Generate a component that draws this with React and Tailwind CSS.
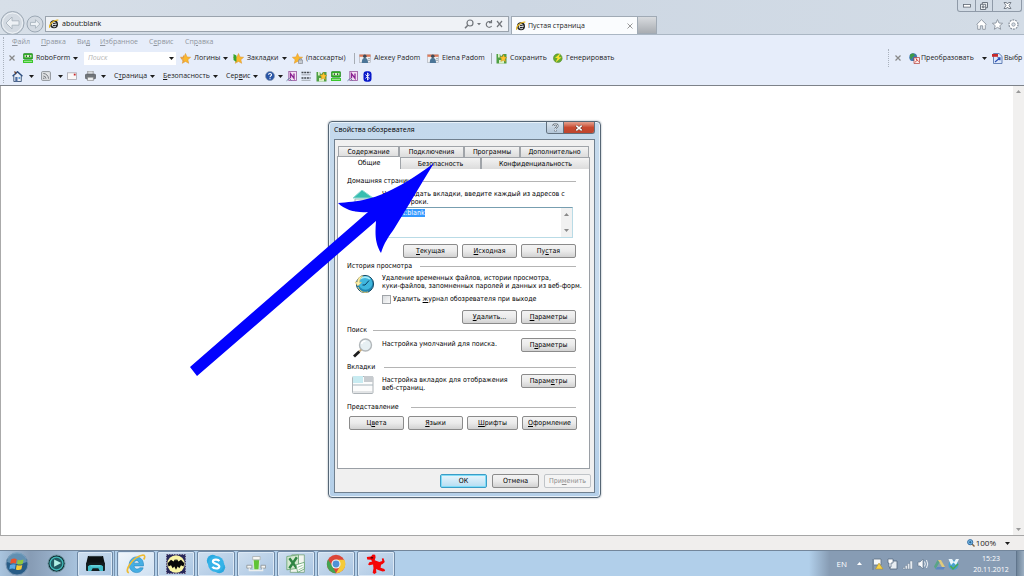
import React, { useEffect, useRef } from "react";

const uiFont = "font-['Open_Sans','Noto_Sans',sans-serif]";
const dlgFont = "font-['DejaVu_Sans_Condensed','DejaVu_Sans',sans-serif]";

function Caret({ className = "" }) {
  return (
    <svg viewBox="0 0 5 3" className={`h-[3px] w-[5px] shrink-0 ${className}`} aria-hidden="true">
      <path d="M0 0H5L2.5 3Z" fill="currentColor" />
    </svg>
  );
}

function IeIcon() {
  return (
    <svg viewBox="0 0 10 10" className="h-[10px] w-[10px] shrink-0" aria-hidden="true">
      <circle cx="5" cy="5.3" r="4" fill="#222" />
      <path d="M3 5.4H7.6M3.1 5A2 2 0 0 1 7 4.6M3.1 5.8A2.1 2.1 0 0 0 7 6.8" stroke="#e9edf2" strokeWidth="1" fill="none" />
      <path d="M.7 8.8C-.5 6 5 .2 9.3 1.2" stroke="#e3b52a" strokeWidth="1.3" fill="none" />
    </svg>
  );
}

function RoboIcon() {
  return (
    <svg viewBox="0 0 10 10" className="h-[10px] w-[10px] shrink-0" aria-hidden="true">
      <rect x=".4" y=".4" width="9.2" height="5.8" rx="1.2" fill="#2fae25" stroke="#157a12" strokeWidth=".6" />
      <rect x="1.6" y="2" width="6.8" height="2.3" fill="#d9f7c9" />
      <path d="M2.8 3.1H4M6 3.1H7.2" stroke="#111" strokeWidth="1.2" />
      <path d="M0 7H10V10H0Z" fill="#3bc72c" />
      <path d="M1 8.4H9" stroke="#e6ffdd" strokeWidth=".6" />
    </svg>
  );
}

function StarIcon({ mark }) {
  return (
    <svg viewBox="0 0 11 11" className="h-[11px] w-[11px] shrink-0" aria-hidden="true">
      <path d="M5.5 .5L7 4 10.6 4.3 7.8 6.7 8.7 10.3 5.5 8.4 2.3 10.3 3.2 6.7 .4 4.3 4 4Z" fill="#fbb82b" stroke="#e09a35" strokeWidth=".6" />
      {mark === "gear" && <path d="M1 5H3.5V2.5M1 5L4 9" stroke="#e39a4a" strokeWidth="1" fill="none" />}
      {mark === "book" && <path d="M.5 1L3.4 2.5V9L.5 7Z" fill="#37a52c" />}
      {mark === "lock" && <path d="M6.5 7H10.5V10.5H6.5ZM7.4 7V5.8H9.6V7" fill="#c7ccd3" stroke="#7d858e" strokeWidth=".6" />}
    </svg>
  );
}

function CardIcon() {
  return (
    <svg viewBox="0 0 12 11" className="h-[11px] w-[12px] shrink-0" aria-hidden="true">
      <rect x=".5" y="1.8" width="11" height="7.8" fill="#eef0f3" stroke="#a8acb3" strokeWidth=".6" />
      <path d="M.5 1.6H11.5V3.8H.5Z" fill="#dd7857" />
      <circle cx="5.8" cy="3.2" r="1.8" fill="#414c59" />
      <path d="M2.8 10C2.8 6 4 5 5.8 5S9 6 9 10Z" fill="#4b7597" />
      <path d="M9 5.6H11M9 7.4H11" stroke="#82909c" strokeWidth=".7" />
    </svg>
  );
}

function SaveIcon() {
  return (
    <svg viewBox="0 0 11 11" className="h-[11px] w-[11px] shrink-0" aria-hidden="true">
      <path d="M.5 1H4L5 3.5 7 1H10.5V10.5H.5Z" fill="#4fa043" />
      <path d="M2 1H3.8V4.4H2ZM3 7H8V10.5H3Z" fill="#d9f0c5" />
      <path d="M7.6 1.2L8.7 4 11 4.3 9 6 9.7 8.8 7.3 7.3 4.8 8.4 5.5 5.9 4 4 6.6 3.8Z" fill="#ffc52e" stroke="#b8811d" strokeWidth=".4" />
    </svg>
  );
}

function OneNoteIcon() {
  return (
    <svg viewBox="0 0 11 11" className="h-[11px] w-[11px] shrink-0" aria-hidden="true">
      <rect x="2.8" y=".5" width="7.7" height="9" fill="#f4dff3" stroke="#97559c" strokeWidth=".8" />
      <path d="M4.5 7.2V2.6L8 7.2V2.6" fill="none" stroke="#8a2392" strokeWidth="1.3" />
      <path d="M.5 9.8L3.4 7.3 5.7 9.8" fill="none" stroke="#6680a2" strokeWidth="1" />
    </svg>
  );
}

function HomeIcon() {
  return (
    <svg viewBox="0 0 11 11" className="h-[11px] w-[11px] shrink-0" aria-hidden="true">
      <path d="M1.8 5V10.5H9.3V5" fill="#e8edf4" stroke="#3b5476" strokeWidth=".9" />
      <path d="M.6 5.3L5.5 .8 10.4 5.3" fill="none" stroke="#2d4e7e" strokeWidth="1.5" />
      <path d="M2 1H3.7V3.2" stroke="#6b391f" strokeWidth="1" fill="none" />
      <rect x="3.3" y="6" width="2.2" height="4.5" fill="#4c6ca2" />
      <rect x="6.5" y="6" width="1.8" height="2" fill="#65a0d8" />
    </svg>
  );
}

function FeedIcon() {
  return (
    <svg viewBox="0 0 10 10" className="h-[10px] w-[10px] shrink-0" aria-hidden="true">
      <rect x=".6" y=".6" width="8.8" height="8.8" rx="1" fill="#e2e4e6" stroke="#858a90" strokeWidth=".9" />
      <path d="M2.3 2.5A5.2 5.2 0 0 1 7.5 7.7M2.3 5A2.7 2.7 0 0 1 5 7.7" fill="none" stroke="#777b80" strokeWidth="1" />
      <circle cx="2.8" cy="7.2" r=".8" fill="#777b80" />
    </svg>
  );
}

function MailIcon() {
  return (
    <svg viewBox="0 0 10 8" className="h-[8px] w-[10px] shrink-0" aria-hidden="true">
      <rect x=".5" y=".8" width="9" height="6.6" fill="#faf8f8" stroke="#a9a8b0" strokeWidth=".8" />
      <rect x="6.8" y="1.7" width="1.8" height="1.8" fill="#c8242a" />
    </svg>
  );
}

function PrinterIcon() {
  return (
    <svg viewBox="0 0 11 10" className="h-[10px] w-[11px] shrink-0" aria-hidden="true">
      <path d="M2.7 0H8.2V4H2.7Z" fill="#d9dcdf" stroke="#777" strokeWidth=".6" />
      <rect x=".4" y="3.2" width="10.2" height="4.6" rx="1" fill="#70757a" stroke="#44484c" strokeWidth=".6" />
      <path d="M2.5 6.2H8.4V9.6H2.5Z" fill="#eceeef" stroke="#777" strokeWidth=".6" />
    </svg>
  );
}

function HelpIcon() {
  return (
    <svg viewBox="0 0 10 10" className="h-[10px] w-[10px] shrink-0" aria-hidden="true">
      <circle cx="5" cy="5" r="4.5" fill="#2754a6" stroke="#8998ae" strokeWidth=".7" />
      <path d="M3.5 3.8C3.6 2 6.6 2.2 6.5 3.9 6.4 4.9 5 4.9 5 6.2" fill="none" stroke="#fff" strokeWidth="1.1" />
      <circle cx="5" cy="7.7" r=".6" fill="#fff" />
    </svg>
  );
}

function FieldsIcon() {
  return (
    <svg viewBox="0 0 10 10" className="h-[10px] w-[10px] shrink-0" aria-hidden="true">
      <path d="M.5 1.5H9.5M.5 7H9.5" stroke="#44484e" strokeWidth="1.4" strokeDasharray="2 .7" />
      <path d="M.5 3.8H9.5M.5 9.3H9.5" stroke="#8f959c" strokeWidth=".8" />
    </svg>
  );
}

function BluetoothIcon() {
  return (
    <svg viewBox="0 0 9 11" className="h-[11px] w-[9px] shrink-0" aria-hidden="true">
      <rect x=".5" y=".2" width="8" height="10.6" rx="3" fill="#0818c9" />
      <path d="M2.4 3.5L6.4 7.2 4.5 9V2L6.4 3.8 2.4 7.4" fill="none" stroke="#fff" strokeWidth=".9" />
    </svg>
  );
}

function GenerateIcon() {
  return (
    <svg viewBox="0 0 10 10" className="h-[10px] w-[10px] shrink-0" aria-hidden="true">
      <circle cx="4.8" cy="5.2" r="4.4" fill="#64ab31" stroke="#5b8a2b" strokeWidth=".5" />
      <path d="M7.5 0L2 5H4.6L2.5 9.6 8.6 4.2H5.8Z" fill="#ffe22f" />
    </svg>
  );
}

function ConvertIcon() {
  return (
    <svg viewBox="0 0 11 11" className="h-[11px] w-[11px] shrink-0" aria-hidden="true">
      <circle cx="4.2" cy="4.2" r="3.9" fill="#3e77b0" />
      <path d="M1 2C2.5 0 5 0 5.5 1.5S4.5 3.5 3.5 4 3 7 1.5 6Z" fill="#3e9a44" />
      <path d="M5 4.5H10.5V10.5H5Z" fill="#f7eded" stroke="#b43c35" strokeWidth=".7" />
      <path d="M6 9.5Q9 7 7.4 5.8T9.8 8.7" stroke="#cf2d24" strokeWidth=".8" fill="none" />
    </svg>
  );
}

function SelectIcon() {
  return (
    <svg viewBox="0 0 11 11" className="h-[11px] w-[11px] shrink-0" aria-hidden="true">
      <path d="M1.5 .5H7L10 3.3V10.5H1.5Z" fill="#dce8fa" stroke="#4769a8" strokeWidth=".8" />
      <path d="M0 1H6V3.8H0Z" fill="#c62a2b" />
      <path d="M3 9L7.8 5M5.5 4.8H8V7.3" stroke="#2b4fb4" strokeWidth="1.1" fill="none" />
    </svg>
  );
}

function Tool({ className = "", icon, label, caret }) {
  return (
    <button type="button" className={`flex h-3 shrink-0 items-center gap-[3px] whitespace-nowrap text-left ${className}`}>
      {icon}
      {label && <span>{label}</span>}
      {caret && <Caret />}
    </button>
  );
}

function Header() {
  return (
    <header className="flex h-[34px] shrink-0 items-stretch bg-linear-to-r from-[#d7dfe8] via-[#cdd7e3] to-[#d3dce6]">
      <nav className="flex shrink-0 items-end" aria-label="История">
        <button type="button" aria-label="Назад" className="h-[25px] w-[25px]">
          <svg viewBox="0 0 25 25" className="h-full w-full">
            <circle cx="12.5" cy="14" r="11.5" fill="#d3dae2" stroke="#9da9b5" />
            <circle cx="12.5" cy="14" r="10" fill="none" stroke="#eef2f6" />
            <path d="M6 14L12 8V11.8H19V16.2H12V20Z" fill="#edf1f5" stroke="#a3aeb9" strokeWidth=".8" />
          </svg>
        </button>
        <button type="button" aria-label="Вперед" className="h-[20px] w-[20px] self-end">
          <svg viewBox="0 0 20 20" className="h-full w-full">
            <circle cx="10" cy="10" r="8" fill="#d3dae2" stroke="#9da9b5" />
            <path d="M14.8 10L10.5 5.7V8.4H5.5V11.6H10.5V14.3Z" fill="#edf1f5" stroke="#a3aeb9" strokeWidth=".8" />
          </svg>
        </button>
      </nav>
      <div className="mt-4 mb-[2px] flex w-[464px] shrink-0 items-center border border-[#9aa3ad] bg-[#eff2f6] pr-1 pl-[3px]">
        <IeIcon />
        <input aria-label="Адрес" defaultValue="about:blank" className="ml-[3px] min-w-0 flex-1 bg-transparent font-['Noto_Sans',sans-serif] text-[7px] leading-[12px] text-[#222] outline-none" />
        <svg viewBox="0 0 40 12" className="h-3 w-10 shrink-0 text-[#73777c]" fill="none" stroke="currentColor" strokeWidth="1.2" aria-hidden="true">
          <circle cx="6" cy="5" r="3" />
          <path d="M3.8 7.3L1 10.2" strokeWidth="1.5" />
          <path d="M13 5H17L15 7.2Z" fill="currentColor" stroke="none" />
          <path d="M27.4 4.5A2.9 2.9 0 1 0 27.6 8M27.5 2V4.7H25" />
          <path d="M33 3L38 9M38 3L33 9" />
        </svg>
      </div>
      <div className="mt-4 ml-[2px] flex w-[127px] shrink-0 items-center border border-b-0 border-[#a0aab5] bg-[#fafcfe] px-1">
        <IeIcon />
        <span className="ml-[2px] flex-1 whitespace-nowrap">Пустая страница</span>
        <button type="button" aria-label="Закрыть вкладку">
          <svg viewBox="0 0 6 6" className="h-[6px] w-[6px] stroke-[#999]"><path d="M.5 .5L5.5 5.5M5.5 .5L.5 5.5" /></svg>
        </button>
      </div>
      <button type="button" aria-label="Создать вкладку" className="mt-4 w-[19px] shrink-0 border border-l-0 border-[#a0aab5] bg-linear-to-b from-[#d8dbdf] to-[#a9adb2]" />
      <div className="ml-auto flex flex-col items-end justify-between pr-[2px]">
        <div className="flex h-3 items-center rounded-b-[3px] border border-t-0 border-[#8f9aa8] text-[#5e6772]">
          <button type="button" aria-label="Свернуть" className="flex h-full w-[18px] items-center justify-center border-r border-[#8f9aa8]">
            <svg viewBox="0 0 8 4" className="h-1 w-2"><rect x=".5" y=".5" width="7" height="2.6" fill="#fff" stroke="currentColor" strokeWidth=".8" /></svg>
          </button>
          <button type="button" aria-label="Развернуть" className="flex h-full w-[17px] items-center justify-center border-r border-[#8f9aa8]">
            <svg viewBox="0 0 8 8" className="h-2 w-2" fill="#f1f4f7" stroke="currentColor" strokeWidth=".9"><path d="M2.3 .5H7.5V5.7H2.3Z" /><path d="M.5 2.3H5.7V7.5H.5Z" /><path d="M2.3 4H4V5.7H2.3Z" /></svg>
          </button>
          <button type="button" aria-label="Закрыть" className="flex h-full w-[28px] items-center justify-center">
            <svg viewBox="0 0 9 7" className="h-[7px] w-[9px]"><path d="M1 .5H3.4L4.5 2 5.6 .5H8L6 3.5 8 6.5H5.6L4.5 5 3.4 6.5H1L3 3.5Z" fill="#fff" stroke="currentColor" strokeWidth=".8" /></svg>
          </button>
        </div>
        <div className="flex gap-[5px] pr-[3px] pb-1">
          <button type="button" aria-label="Домой"><svg viewBox="0 0 11 11" className="h-[11px] w-[11px]" fill="#fff" stroke="#8b949f" strokeWidth=".9"><path d="M5.5 .7L.8 5.3 1.7 6.2V10.3H4.3V6.8H6.7V10.3H9.3V6.2L10.2 5.3Z" /></svg></button>
          <button type="button" aria-label="Избранное"><svg viewBox="0 0 11 11" className="h-[11px] w-[11px]" fill="#fff" stroke="#8b949f" strokeWidth=".9"><path d="M5.5 .5L7 4 10.6 4.3 7.8 6.7 8.7 10.3 5.5 8.4 2.3 10.3 3.2 6.7 .4 4.3 4 4Z" /></svg></button>
          <button type="button" aria-label="Настройки"><svg viewBox="0 0 11 11" className="h-[11px] w-[11px]"><circle cx="5.5" cy="5.5" r="4.5" fill="#fff" stroke="#8b949f" strokeWidth="1.4" strokeDasharray="1.8 1" /><circle cx="5.5" cy="5.5" r="3.7" fill="#fff" /><circle cx="5.5" cy="5.5" r="1.7" fill="#d5dde6" stroke="#8b949f" strokeWidth=".8" /></svg></button>
        </div>
      </div>
    </header>
  );
}

function CloseBar() {
  return (
    <button type="button" aria-label="Закрыть панель" className="w-[14px] shrink-0">
      <svg viewBox="0 0 6 6" className="h-[6px] w-[6px] stroke-[#888]"><path d="M.5 .5L5.5 5.5M5.5 .5L.5 5.5" strokeWidth="1.2" /></svg>
    </button>
  );
}

function Toolbars() {
  return (
    <div className="flex h-[52px] shrink-0 overflow-hidden border-t border-b border-t-[#aab6c3] border-b-[#7d8289] bg-[#e6edfa]">
      <div className="my-[2px] w-[4px] shrink-0 border-r border-dotted border-[#aab2bd]" />
      <div className="flex min-w-0 flex-1 flex-col pl-[5px]">
        <nav className="flex h-[14px] items-center pl-[3px] text-[#9096a0]">
          <button type="button" className="w-[29px] text-left"><u>Ф</u>айл</button>
          <button type="button" className="w-9 text-left"><u>П</u>равка</button>
          <button type="button" className="w-[23px] text-left">Ви<u>д</u></button>
          <button type="button" className="w-[49px] text-left"><u>И</u>збранное</button>
          <button type="button" className="w-9 text-left">С<u>е</u>рвис</button>
          <button type="button" className="text-left">Сп<u>р</u>авка</button>
        </nav>
        <div className="flex h-[18px] items-center">
          <CloseBar />
          <Tool className="w-[61px]" icon={<RoboIcon />} label="RoboForm" caret />
          <div className="mr-1 flex h-[13px] w-[92px] shrink-0 items-center bg-white pr-[2px] pl-1">
            <input aria-label="Поиск" placeholder="Поиск" className="min-w-0 flex-1 bg-transparent italic outline-none placeholder:text-[#b5b5b5]" />
            <Caret />
          </div>
          <Tool className="w-[53px]" icon={<StarIcon mark="gear" />} label="Логины" caret />
          <Tool className="w-[59px]" icon={<StarIcon mark="book" />} label="Закладки" caret />
          <Tool className="w-[62px]" icon={<StarIcon mark="lock" />} label="(пасскарты)" />
          <div className="mr-1 h-[11px] w-px shrink-0 bg-[#a7adb5]" />
          <Tool className="w-[68px]" icon={<CardIcon />} label="Alexey Padom" />
          <Tool className="w-[64px]" icon={<CardIcon />} label="Elena Padom" />
          <div className="mr-1 h-[11px] w-px shrink-0 bg-[#a7adb5]" />
          <Tool className="w-[57px]" icon={<SaveIcon />} label="Сохранить" />
          <Tool icon={<GenerateIcon />} label="Генерировать" />
        </div>
        <div className="flex h-[18px] items-center pl-[3px]">
          <Tool className="w-[29px]" icon={<span className="flex w-[14px]"><HomeIcon /></span>} caret />
          <Tool className="w-[26px]" icon={<span className="flex w-[14px]"><FeedIcon /></span>} caret />
          <Tool className="w-[18px]" icon={<MailIcon />} />
          <Tool className="w-[29px]" icon={<span className="flex w-[13px]"><PrinterIcon /></span>} caret />
          <Tool className="w-[49px]" label={<>С<u>т</u>раница</>} caret />
          <Tool className="w-[63px]" label={<><u>Б</u>езопасность</>} caret />
          <Tool className="w-[39px]" label={<>Сер<u>в</u>ис</>} caret />
          <Tool className="w-[21px]" icon={<HelpIcon />} caret />
          <Tool className="w-[15px]" icon={<OneNoteIcon />} />
          <Tool className="w-[15px]" icon={<FieldsIcon />} />
          <Tool className="w-[15px]" icon={<SaveIcon />} />
          <Tool className="w-4" icon={<RoboIcon />} />
          <Tool className="w-4" icon={<OneNoteIcon />} />
          <Tool icon={<BluetoothIcon />} />
        </div>
      </div>
      <div className="mt-[14px] flex h-[18px] w-[136px] shrink-0 items-center overflow-hidden border-l border-dotted border-[#aab2bd] pl-[6px]">
        <CloseBar />
        <button type="button" className="flex w-[73px] shrink-0 items-center gap-px whitespace-nowrap"><ConvertIcon />Преобразовать</button>
        <Caret className="mr-[5px]" />
        <button type="button" className="flex shrink-0 items-center gap-px whitespace-nowrap"><SelectIcon />Выбр</button>
      </div>
    </div>
  );
}

function DlgButton({ children, className = "w-[55px]", tone = "normal" }) {
  const tones = {
    normal: "border-[#8b8b8b] bg-linear-to-b from-[#f3f3f3] via-[#ebebeb] to-[#d2d2d2] text-black",
    primary: "border-[#3a9cc6] bg-linear-to-b from-[#e8f5fc] to-[#b5ddf2] text-black shadow-[inset_0_0_0_1px_#7fdcf7]",
    off: "border-[#c0c4c8] bg-[#f4f4f4] text-[#8f8f8f]",
  };
  return (
    <button type="button" disabled={tone === "off"} className={`flex h-[14px] shrink-0 items-center justify-center rounded-[2px] border whitespace-nowrap ${tones[tone]} ${className}`}>
      <span>{children}</span>
    </button>
  );
}

function Legend({ children, className = "gap-2" }) {
  return (
    <h2 className={`flex h-[10px] items-center whitespace-nowrap ${className}`}>
      {children}
      <span className="h-px flex-1 bg-[#b4b4b4]" />
    </h2>
  );
}

const tabBase = "h-full border border-b-0 border-[#a0a4a9] bg-linear-to-b from-[#f3f3f3] to-[#dcdcdc] whitespace-nowrap";

function OptionsDialog() {
  const pages = useRef(null);
  useEffect(() => {
    pages.current.focus();
    pages.current.select();
  }, []);
  return (
    <section role="dialog" aria-label="Свойства обозревателя" className={`absolute top-[121px] left-[328px] flex w-[273px] flex-col rounded-[4px] border border-[#566675] bg-linear-to-b from-[#c4d9ec] via-[#c9dcee] to-[#b4cfe8] px-[5px] pb-[4px] text-[7px] leading-[8px] text-black shadow-[0_0_2px_#8a97a4,inset_0_0_0_1px_#e8f2fa] ${dlgFont}`}>
      <div className="flex h-[17px] items-start justify-between">
        <h1 className={`pt-[3px] text-[7px] leading-[10px] ${uiFont}`}>Свойства обозревателя</h1>
        <div className="flex h-3 overflow-hidden rounded-b-[3px] border border-t-0 border-[#61707e]">
          <button type="button" aria-label="Справка" className="flex w-[17px] items-center justify-center border-r border-[#61707e] bg-linear-to-b from-[#dce6ef] to-[#b3c5d7]">
            <svg viewBox="0 0 7 9" className="h-[9px] w-[7px]" fill="none"><path d="M1.3 3C1.4 .6 5.7 .6 5.6 3 5.5 4.3 3.5 4.2 3.5 6M3.5 7V8.4" stroke="#566370" strokeWidth="2" /><path d="M1.3 3C1.4 .6 5.7 .6 5.6 3 5.5 4.3 3.5 4.2 3.5 6M3.5 7.1V8.2" stroke="#fff" strokeWidth=".9" /></svg>
          </button>
          <button type="button" aria-label="Закрыть" className="flex w-[30px] items-center justify-center bg-linear-to-b from-[#e3a18f] via-[#c84930] to-[#bd452e]">
            <svg viewBox="0 0 8 6" className="h-[6px] w-2"><path d="M1 .5L7 5.5M7 .5L1 5.5" stroke="#60372f" strokeWidth="2.5" /><path d="M1.3 .7L6.7 5.3M6.7 .7L1.3 5.3" stroke="#fff" strokeWidth="1.6" /></svg>
          </button>
        </div>
      </div>
      <div className="flex flex-col border border-[#70808f] bg-[#f0f0f0] pt-[6px] pr-[4px] pb-[4px] pl-[2px]">
        <div role="tablist">
          <div className="grid h-[11px] grid-cols-[61px_65px_56px_1fr] pr-px pl-px">
            <button type="button" role="tab" className={tabBase}>Содержание</button>
            <button type="button" role="tab" className={tabBase}>Подключения</button>
            <button type="button" role="tab" className={tabBase}>Программы</button>
            <button type="button" role="tab" className={tabBase}>Дополнительно</button>
          </div>
          <div className="grid h-3 grid-cols-[63px_81px_1fr]">
            <button type="button" role="tab" aria-selected="true" className="-mt-px border-t border-l border-[#a0a4a9] bg-white">Общие</button>
            <button type="button" role="tab" className={tabBase}>Безопасность</button>
            <button type="button" role="tab" className={tabBase}>Конфиденциальность</button>
          </div>
        </div>
        <div role="tabpanel" className="flex flex-col border border-t-0 border-[#9a9fa5] bg-white pt-[7px] pr-[13px] pb-[38px] pl-[9px]">
          <Legend>Домашняя страница</Legend>
          <div className="mt-[4px] flex">
            <svg viewBox="0 0 20 24" className="mr-[9px] ml-[6px] h-6 w-5 shrink-0" aria-hidden="true">
              <path d="M2 9H18V21H2Z" fill="#eef3f5" stroke="#a1b4ba" />
              <path d="M0 8L9 0 20 8Z" fill="#38bdb0" stroke="#8cd9d1" />
              <path d="M7 12H12V21H7Z" fill="#a77c4f" />
            </svg>
            <div className="flex-1">
              <p className="whitespace-nowrap">Чтобы создать вкладки, введите каждый из адресов с<br />новой строки.</p>
              <div className="mt-px mr-[3px] flex h-[31px] border border-[#b9dbe6] border-t-[#779eb0]">
                <textarea ref={pages} aria-label="Адреса домашних страниц" defaultValue="about:blank" className="min-w-0 flex-1 resize-none overflow-hidden bg-white px-[4px] pt-px outline-none selection:bg-[#3399ff] selection:text-white" />
                <div className="flex w-[11px] flex-col items-center justify-between bg-[#f1f1f1] py-[5px] text-[#8a8a8a]">
                  <Caret className="rotate-180" />
                  <Caret />
                </div>
              </div>
            </div>
          </div>
          <div className="mt-[6px] flex justify-end gap-1">
            <DlgButton><u>Т</u>екущая</DlgButton>
            <DlgButton><u>И</u>сходная</DlgButton>
            <DlgButton>Пу<u>с</u>тая</DlgButton>
          </div>
          <Legend className="mt-[3px] gap-2">История просмотра</Legend>
          <div className="mt-[3px] flex">
            <svg viewBox="0 0 22 20" className="mr-[6px] ml-[7px] h-5 w-[22px] shrink-0" aria-hidden="true">
              <circle cx="11" cy="10" r="8.6" fill="#2188b3" stroke="#174c68" />
              <circle cx="11.5" cy="9" r="6.8" fill="#3fb7de" />
              <path d="M6 5A7.5 7.5 0 0 1 16 5" stroke="#a9ecfa" strokeWidth="1.6" fill="none" />
              <path d="M11 11L15 6.5M11 11L8.5 11" stroke="#083d63" strokeWidth="1" />
              <path d="M9 2C5 2 3.5 5 3.5 8L1 8 3.8 12 7.5 8.4H5.5C5.5 5.5 6.5 3.5 9 2Z" fill="#fff1a9" stroke="#d8bf72" strokeWidth=".6" />
              <path d="M4 13C6 18 10 19 14 18" stroke="#f0d67d" strokeWidth="1" fill="none" />
            </svg>
            <div className="flex-1">
              <p className="whitespace-nowrap">Удаление временных файлов, истории просмотра,<br />куки-файлов, запомненных паролей и данных из веб-форм.</p>
              <label className="mt-1 flex h-[10px] items-center gap-[2px] whitespace-nowrap">
                <input type="checkbox" className="h-[9px] w-[9px] shrink-0 appearance-none border border-[#a0a4a8] bg-linear-to-br from-[#d9dcdf] to-[#fafafa]" />
                <span>Удалить <u>ж</u>урнал обозревателя при выходе</span>
              </label>
            </div>
          </div>
          <div className="mt-[6px] flex justify-end gap-1">
            <DlgButton><u>У</u>далить...</DlgButton>
            <DlgButton><u>П</u>араметры</DlgButton>
          </div>
          <Legend className="mt-px gap-[6px]">Поиск</Legend>
          <div className="mt-[3px] flex">
            <svg viewBox="0 0 22 20" className="mr-[8px] ml-[5px] h-5 w-[22px] shrink-0" aria-hidden="true">
              <circle cx="13.5" cy="7" r="6" fill="#e6eff2" stroke="#b2b7ba" strokeWidth="1.4" />
              <path d="M9.5 6A4 4 0 0 1 13.5 3" stroke="#fff" strokeWidth="1.6" fill="none" />
              <path d="M9.3 11.6L7.3 13.5" stroke="#c5a877" strokeWidth="2" />
              <path d="M7.3 13.5L2 18.6" stroke="#1d1d1d" strokeWidth="2.8" />
            </svg>
            <p className="mt-[2px] flex-1">Настройка умолчаний для поиска.</p>
            <DlgButton>П<u>а</u>раметры</DlgButton>
          </div>
          <Legend className="mt-1 gap-[9px]">Вкладки</Legend>
          <div className="mt-[2px] flex">
            <svg viewBox="0 0 22 20" className="mr-[8px] ml-[5px] h-5 w-[22px] shrink-0" aria-hidden="true">
              <rect x=".5" y="2.5" width="20.5" height="17" rx="1" fill="#fcfcfc" stroke="#aeb4b8" />
              <path d="M1 2H11V9H1Z" fill="#c8ebf1" />
              <path d="M12 2H21V8H12Z" fill="#c7cbcf" />
              <path d="M1 11H21" stroke="#a8b6bd" strokeWidth="1" />
              <path d="M1 18H21" stroke="#c8cccf" strokeWidth="1" />
            </svg>
            <p className="mt-[2px] flex-1 whitespace-nowrap">Настройка вкладок для отображения<br />веб-страниц.</p>
            <DlgButton>Парам<u>е</u>тры</DlgButton>
          </div>
          <Legend className="mt-[8px] gap-3">Представление</Legend>
          <div className="mt-[4px] -mr-px flex justify-between pl-[2px]">
            <DlgButton>Ц<u>в</u>ета</DlgButton>
            <DlgButton><u>Я</u>зыки</DlgButton>
            <DlgButton className="w-[51px]"><u>Ш</u>рифты</DlgButton>
            <DlgButton><u>О</u>формление</DlgButton>
          </div>
        </div>
        <div className="mt-[5px] -mr-px flex justify-end gap-[5px]">
          <DlgButton tone="primary" className="w-[47px]">ОК</DlgButton>
          <DlgButton className="w-[47px]">Отмена</DlgButton>
          <DlgButton tone="off" className="w-[47px]">При<u>м</u>енить</DlgButton>
        </div>
      </div>
    </section>
  );
}

function TaskButton({ label, children, active }) {
  return (
    <button type="button" aria-label={label} className={`flex h-[26px] w-[38px] shrink-0 items-center justify-center rounded-[2px] border border-[#6f89a6] shadow-[inset_0_0_0_1px_#dbe8f5] ${active ? "bg-linear-to-br from-[#f1f6fb] to-[#cfe0f1]" : "bg-linear-to-br from-[#cfdfef] to-[#a9c5e2]"}`}>
      <svg viewBox="0 0 24 24" className="h-5 w-5">{children}</svg>
    </button>
  );
}

function Taskbar() {
  return (
    <footer className="flex h-[26px] shrink-0 items-center border-t border-[#73869b] bg-[linear-gradient(to_right,#a9c4de_0%,#879cb5_3%,#9db5cf_6%,#b1cfea_9%,#b1cfea_79%,#879cb4_81%,#879cb4_100%)]">
      <button type="button" aria-label="Пуск" className="ml-[5px] h-6 w-6 shrink-0">
        <svg viewBox="0 0 24 24" className="h-full w-full">
          <circle cx="12" cy="12" r="11" fill="#285c86" stroke="#7795b2" />
          <path d="M2 10A10 10 0 0 1 22 10Q12 14 2 10Z" fill="#7aa6c5" opacity=".7" />
          <path d="M6 7.5Q9 5.8 11.7 7.2L10.9 11.5Q8 10.4 5.2 12Z" fill="#e7532c" />
          <path d="M12.7 7.7Q15.5 8.8 18.6 7.5L17.6 12Q14.6 13.1 11.9 12Z" fill="#8dc63f" />
          <path d="M5 13Q8 11.5 10.7 12.6L9.9 17Q7 15.7 4.3 17.2Z" fill="#5ba9e6" />
          <path d="M11.7 13Q14.5 14.1 17.3 13L16.4 17.3Q13.5 18.7 10.9 17.4Z" fill="#f8cb35" />
        </svg>
      </button>
      <button type="button" aria-label="Проигрыватель" className="ml-[18px] h-[19px] w-[19px] shrink-0">
        <svg viewBox="0 0 20 20" className="h-full w-full"><circle cx="10" cy="10" r="9" fill="#102b32" stroke="#719ba7" /><circle cx="10" cy="10" r="6.8" fill="#225c63" stroke="#42b9b8" strokeWidth="1.4" /><path d="M7.5 5.8L15 9.4 7.5 13.4Z" fill="#b3f0e5" /></svg>
      </button>
      <div className="ml-[11px] flex gap-[2px]">
        <div className="flex w-[38px] border-r border-[#7b94af]">
          <button type="button" aria-label="Устройство" className="flex h-[26px] w-9 items-center justify-center rounded-[2px] border border-[#6f89a6] bg-linear-to-br from-[#cfdfef] to-[#a9c5e2] shadow-[inset_0_0_0_1px_#dbe8f5]">
            <svg viewBox="0 0 22 18" className="h-[17px] w-[21px]">
              <path d="M3 1H19L21 10H1Z" fill="#0c1112" />
              <path d="M4 1.5H18" stroke="#39474c" />
              <rect x="1" y="8" width="20" height="9" rx="1" fill="#131b1e" />
              <path d="M3 12L5 10.5H17L19 12V17H15.5L14 14H8L6.5 17H3Z" fill="#3fbcc8" />
              <path d="M6 11.5H16" stroke="#95e9ee" strokeWidth=".8" />
            </svg>
          </button>
        </div>
        <TaskButton label="Internet Explorer" active>
          <path fillRule="evenodd" d="M12.5 3.5C18 3.5 21.5 8 21 14.3H9.6C10 18.5 15 19 16.3 16.6H20.6C19 21 16 22.3 12.6 22.3 7.5 22.3 3.8 18 3.8 13S7.5 3.5 12.5 3.5ZM9.6 11H15.8C15.5 7 10 7 9.6 11Z" fill="#46aee3" stroke="#1f85c0" strokeWidth=".7" />
          <path d="M3.5 22.5C-3 21 8 3 20.5 1.2 23 1.3 23 4 21.2 6.5" fill="none" stroke="#edbb35" strokeWidth="2" />
        </TaskButton>
        <TaskButton label="The Bat!">
          <path d="M0 0H24V24H0Z" fill="#28285a" /><path d="M.5 .5H23.5V23.5H.5Z" fill="none" stroke="#fff" strokeDasharray="1 1" /><circle cx="12" cy="12" r="10.5" fill="#f9f5a7" /><path d="M2 11L6 7 9 9 11 6 12 8 13 6 15 9 18 7 22 11 21 15 18 13.5 16 17 14 15 12 19 10 15 8 17 6 13.5 3 15Z" fill="#080808" />
        </TaskButton>
        <TaskButton label="Skype">
          <circle cx="8" cy="8" r="7" fill="#2aa9e0" /><circle cx="16" cy="16" r="7" fill="#2aa9e0" /><circle cx="12" cy="12" r="9.6" fill="#35b3e8" /><path d="M16 8.5C14.5 6 8.3 6.2 8.3 9S16 11.6 16 15 9 18 7.7 15.3" fill="none" stroke="#fff" strokeWidth="2.6" />
        </TaskButton>
        <TaskButton label="Модем">
          <path d="M8.5 5H16.5L15.5 19H9.5Z" fill="#5fc436" stroke="#e8f3e5" /><path d="M8 3H17V7H8Z" fill="#f6f6f3" stroke="#aab0b2" /><path d="M1 13.5H7V17H1ZM18 13.5H23.5V17H18Z" fill="#f4f5f3" stroke="#8b9296" /><path d="M4 17V20H20V17" stroke="#eceff0" strokeWidth="1.5" fill="none" />
        </TaskButton>
        <TaskButton label="Excel">
          <path d="M7 1H22V22H5Z" fill="#f1f5ee" stroke="#76a27e" /><path d="M1 3L15 1V17L1 19Z" fill="#d4e8cf" stroke="#69a372" /><path d="M4 5L13 17M13 4L4 17" stroke="#2e8442" strokeWidth="3" /><path d="M12 13L22 10V18L14 22Z" fill="#fff" stroke="#5fa36c" /><path d="M14 16L20 13.5M15 19L21 16" stroke="#88ba8e" />
        </TaskButton>
        <TaskButton label="Chrome">
          <circle cx="12" cy="12" r="11" fill="#dc4638" /><path d="M2.5 6.5L8 15 12 23A11 11 0 0 1 2.5 6.5Z" fill="#43a451" /><path d="M12 7H22A11 11 0 0 1 12 23L16.5 15Z" fill="#f5cb39" /><circle cx="12" cy="12" r="5.5" fill="#f2f4f5" /><circle cx="12" cy="12" r="4.1" fill="#4e91d5" />
        </TaskButton>
        <TaskButton label="IrfanView">
          <path d="M1 3.5L6 3 8 .5 11 1 11.5 4 10.5 7.5 16 9.5 19.5 8.5 19 5.5 21 5 22.5 9.5 20 12 18 13 17.5 16.5 22 18 23 20.5 20 21 15.5 19.5 12 18 12.5 22.5 10 24 8 22.5 9 17 8.5 12.5 4 13.5 2.5 12.5 4 10 7.5 9 6 7 1.5 6.5Z" fill="#f50505" /><path d="M5.5 4.5H8.5" stroke="#5a0505" strokeWidth="1.8" />
        </TaskButton>
      </div>
      <div className="ml-auto flex h-full shrink-0 items-center text-white">
        <span className="mr-[10px] text-[8px]">EN</span>
        <Caret className="mr-2 rotate-180" />
        <svg viewBox="0 0 90 14" className="h-[14px] w-[90px]" aria-hidden="true">
          <path d="M3 2V13M4 2H11V8H4" fill="#f6f7f8" stroke="#5e7081" strokeWidth=".8" /><path d="M9 6L13 12H5.5Z" fill="#f6d14a" stroke="#a98b24" strokeWidth=".5" />
          <path d="M20 4H27V12H20Z" fill="#e8edf2" stroke="#51667c" strokeWidth=".8" /><path d="M18 2H23V6H21V10H19V6H18Z" fill="#fff" stroke="#51667c" strokeWidth=".7" />
          <path d="M33 12V10.5H35V12ZM35.2 12V8.5H37.4V12ZM37.6 12V6.5H39.8V12ZM40 12V4H42.5V12Z" fill="#e6ebf0" stroke="#677a8e" strokeWidth=".4" />
          <path d="M48 5H50L53 2V12L50 9H48Z" fill="#f5f7fa" stroke="#5b6f83" strokeWidth=".6" /><path d="M54.5 4.5Q56 7 54.5 9.5M56.5 3Q59 7 56.5 11" stroke="#f2f5f8" fill="none" />
          <path d="M68 3H71L75 10H72Z" fill="#dfca7c" /><path d="M67.5 3L64 9.5 65.5 12 69.5 5.5Z" fill="#5aa487" /><path d="M67 10H75L73.5 12.5H65.5Z" fill="#5d86c2" />
          <circle cx="83.5" cy="8" r="5" fill="#46a2cf" /><path d="M78.5 2L82 2 84 5 86 2H89L86 8 83.5 5.5 81 8Z" fill="#e9f5fb" /><path d="M80.5 9L83 12 88 7" stroke="#48a950" strokeWidth="1.5" fill="none" />
        </svg>
        <time className="mr-[2px] ml-[8px] w-[46px] text-center leading-[11px]">15:23<br />20.11.2012</time>
        <button type="button" aria-label="Рабочий стол" className="h-full w-[8px] border-l border-[#60758c] bg-linear-to-r from-[#6f8499] to-[#9db0c3]" />
      </div>
    </footer>
  );
}

export default function App() {
  return (
    <div className={`relative flex h-screen w-full flex-col overflow-hidden bg-white text-[7px] leading-[10px] text-[#1c1c1c] ${uiFont}`}>
      <Header />
      <Toolbars />
      <main className="flex min-h-0 flex-1 border-l border-[#aaa]">
        <div className="flex-1 bg-white" />
        <div className="flex w-[11px] flex-col items-center justify-between bg-[#f1f0ef] py-1 text-[#999]">
          <Caret className="rotate-180" />
          <Caret />
        </div>
      </main>
      <div className="flex h-[15px] shrink-0 items-center justify-end border-t border-[#a6a6a6] bg-[#f0eeed] pr-[14px]">
        <button type="button" className="flex items-center gap-px">
          <svg viewBox="0 0 8 8" className="h-2 w-2"><path d="M4.8 4.8L7.5 7.5" stroke="#806545" strokeWidth="1.4" /><circle cx="3.2" cy="3.2" r="2.6" fill="#88c9f1" stroke="#356ca2" /><path d="M1.8 3.2H4.6M3.2 1.8V4.6" stroke="#144d83" strokeWidth=".8" /></svg>
          <span className="mr-2 text-[8px]">100%</span>
          <Caret />
        </button>
      </div>
      <Taskbar />
      <OptionsDialog />
      <svg className="pointer-events-none absolute inset-0 h-full w-full" aria-hidden="true">
        <path d="M434 163C414 178 389 194 367 199C357 202 347 202 338 203C345 210 356 213 368 212L190 367L197 376L376 221C375 234 375 243 381 253C384 243 389 236 394 229C407 208 421 184 434 163Z" fill="#0202fe" />
      </svg>
    </div>
  );
}
